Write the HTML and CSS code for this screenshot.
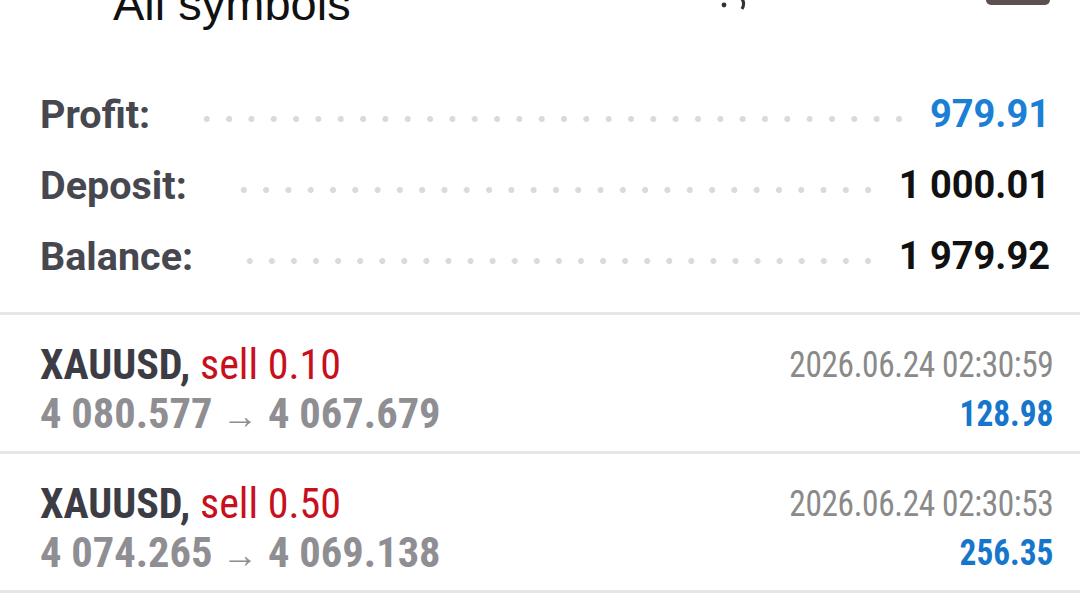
FILE: index.html
```html
<!DOCTYPE html>
<html lang="en">
<head>
    <meta charset="UTF-8">
    <meta name="viewport" content="width=device-width, initial-scale=1.0">
    <title>History</title>
    <link rel="stylesheet" href="styles.css">
</head>
<body>
    <div class="topbar">
        <span class="title">All symbols</span>
        <svg class="top-icon" width="34" height="30" viewBox="0 0 34 30">
            <circle cx="6" cy="25" r="2.4" fill="#333"/>
            <path d="M22 17 Q28 22 24 29" stroke="#333" stroke-width="3" fill="none"/>
        </svg>
        <span class="top-btn"></span>
    </div>

    <div class="summary">
        <div class="sum-row">
            <span class="label">Profit:</span>
            <span class="leader"></span>
            <span class="value positive">979.91</span>
        </div>
        <div class="sum-row">
            <span class="label">Deposit:</span>
            <span class="leader"></span>
            <span class="value">1 000.01</span>
        </div>
        <div class="sum-row">
            <span class="label">Balance:</span>
            <span class="leader"></span>
            <span class="value">1 979.92</span>
        </div>
    </div>

    <div class="deals">
        <div class="deal">
            <div class="deal-left">
                <div class="deal-title"><b>XAUUSD,</b> <span class="sell">sell 0.10</span></div>
                <div class="deal-prices">4 080.577 <span class="arrow">&rarr;</span> 4 067.679</div>
            </div>
            <div class="deal-right">
                <div class="deal-time">2026.06.24 02:30:59</div>
                <div class="deal-profit">128.98</div>
            </div>
        </div>
        <div class="deal">
            <div class="deal-left">
                <div class="deal-title"><b>XAUUSD,</b> <span class="sell">sell 0.50</span></div>
                <div class="deal-prices">4 074.265 <span class="arrow">&rarr;</span> 4 069.138</div>
            </div>
            <div class="deal-right">
                <div class="deal-time">2026.06.24 02:30:53</div>
                <div class="deal-profit">256.35</div>
            </div>
        </div>
    </div>
</body>
</html>
```

FILE: styles.css
```css
body { margin: 0; background: #fff; font-family: Roboto, "Noto Sans", sans-serif; overflow: hidden; }

.topbar { display: flex; align-items: flex-start; height: 48px; margin-top: -20px; padding: 0 30px 0 113px; }
.title { font-family: "Liberation Sans", Arial, sans-serif; font-size: 47px; line-height: 48px; color: #111; }
.top-icon { margin-left: auto; margin-right: 234px; }
.top-btn { width: 64px; height: 25px; border-radius: 5px; background: #5b504d; }

.summary { padding: 51px 30px 20px 40px; }
.sum-row { display: flex; align-items: flex-start; height: 71px; line-height: 71px; font-size: 38px; font-weight: bold; }
.label { color: #47474f; font-size: 39.5px; }
.leader { flex: 1; height: 6px; margin: 37px 20px 0 46px; background: radial-gradient(circle, #dadada 2.7px, transparent 3.3px) 0 0 / 21.7px 6px; background-repeat: space no-repeat; }
.value { color: #111; }
.value.positive { color: #1b7fd6; }

.deals { border-bottom: 3px solid #e6e6e6; }
.deal { display: flex; justify-content: space-between; height: 139px; border-top: 3px solid #e6e6e6; padding: 25px 27px 0 40px; box-sizing: border-box; }
.deal-left, .deal-right { font-family: "Roboto Condensed", Roboto, sans-serif; font-stretch: condensed; line-height: 49px; }
.deal-right { text-align: right; transform: scaleX(0.9); transform-origin: right center; }
.deal-title { font-size: 42px; color: #c8101c; }
.deal-title b { color: #3c3c44; }
.sell { color: #c8101c; }
.deal-prices { font-size: 42.5px; font-weight: bold; color: #8e8e93; }
.arrow { font-weight: normal; font-size: 36px; }
.deal-time { font-size: 37px; letter-spacing: -0.4px; color: #8a8a8a; }
.deal-profit { font-size: 37px; font-weight: bold; color: #1576cc; }
```
